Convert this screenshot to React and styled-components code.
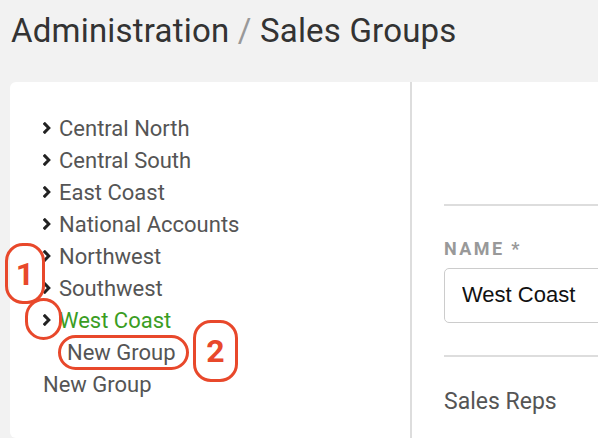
import React from 'react'
import styled, { createGlobalStyle } from 'styled-components'

const GlobalStyle = createGlobalStyle`
  html, body {
    margin: 0;
    padding: 0;
    background: #f2f2f2;
    overflow: hidden;
  }
  body {
    font-family: Roboto, "Liberation Sans", sans-serif;
  }
`;

const groups = [
  { name: 'Central North' },
  { name: 'Central South' },
  { name: 'East Coast' },
  { name: 'National Accounts' },
  { name: 'Northwest' },
  { name: 'Southwest' },
  { name: 'West Coast', active: true },
]

function Chevron() {
  return (
    <svg width="8" height="12" viewBox="0 0 8 12">
      <path d="M1.8 1.9 L5.8 6 L1.8 10.1" fill="none" stroke="#222" strokeWidth="3" strokeLinecap="square" />
    </svg>
  )
}

export default function App() {
  return (
    <Page>
      <GlobalStyle />
      <Title>
        Administration <Slash>/</Slash> Sales Groups
      </Title>
      <Card>
        <TreePane>
          {groups.map(g => (
            <Row key={g.name}>
              <Toggle><Chevron /></Toggle>
              <Label $active={g.active}>{g.name}</Label>
            </Row>
          ))}
          <Row $indent={24}>
            <Label>New Group</Label>
          </Row>
          <Row>
            <Label>New Group</Label>
          </Row>
        </TreePane>
        <DetailPane>
          <Rule />
          <FieldLabel>Name *</FieldLabel>
          <Input defaultValue="West Coast" />
          <Rule />
          <Section>Sales Reps</Section>
        </DetailPane>
      </Card>

      <Callout $box style={{ left: 5, top: 243, width: 40, height: 61 }}>
        <Num>1</Num>
      </Callout>
      <Callout style={{ left: 25, top: 298, width: 37, height: 42 }} />
      <Callout style={{ left: 58, top: 335, width: 131, height: 35 }} />
      <Callout $box style={{ left: 193, top: 320, width: 45, height: 62 }}>
        <Num>2</Num>
      </Callout>
    </Page>
  )
}

const Page = styled.div`
  position: relative;
  width: 598px;
  height: 438px;
`;

const Title = styled.h1`
  margin: 0;
  padding: 12px 0 0 11px;
  height: 70px;
  box-sizing: border-box;
  font-family: Roboto, sans-serif;
  font-weight: 400;
  font-size: 33px;
  line-height: 38px;
  color: #333;
  letter-spacing: 0.2px;
`;

const Slash = styled.span`
  color: #999;
`;

const Card = styled.div`
  margin: 12px 0 0 10px;
  width: 720px;
  height: 356px;
  background: #fff;
  border-radius: 6px;
  display: flex;
`;

const TreePane = styled.div`
  width: 402px;
  border-right: 2px solid #ddd;
  padding: 30px 0 0 33px;
  box-sizing: border-box;
`;

const Row = styled.div`
  display: flex;
  align-items: center;
  height: 32px;
  padding-left: ${p => p.$indent || 0}px;
`;

const Toggle = styled.span`
  width: 16px;
  display: flex;
  align-items: center;
`;

const Label = styled.span`
  font-size: 22px;
  color: ${p => (p.$active ? '#3a9d23' : '#555')};
`;

const DetailPane = styled.div`
  flex: 1;
  padding: 122px 0 0 32px;
`;

const Rule = styled.div`
  height: 2px;
  background: #ddd;
`;

const FieldLabel = styled.div`
  margin-top: 33px;
  font-size: 18px;
  font-weight: 700;
  text-transform: uppercase;
  letter-spacing: 2.4px;
  color: #999;
  line-height: 20px;
`;

const Input = styled.input`
  display: block;
  box-sizing: border-box;
  margin: 9px 0 32px;
  width: 100%;
  height: 55px;
  padding: 0 17px 2px;
  border: 1px solid #ccc;
  border-radius: 5px;
  font-family: "Liberation Sans", Arial, sans-serif;
  font-size: 22px;
  color: #111;
  outline: none;
`;

const Section = styled.div`
  margin-top: 31px;
  font-size: 23px;
  color: #555;
`;

const Callout = styled.div`
  position: absolute;
  box-sizing: border-box;
  border: 3px solid #e8482b;
  border-radius: ${p => (p.$box ? '18px' : '999px')};
  display: flex;
  align-items: center;
  justify-content: center;
`;

const Num = styled.span`
  font-family: Roboto, sans-serif;
  font-weight: 700;
  font-size: 32px;
  color: #e8482b;
  line-height: 1;
`;
